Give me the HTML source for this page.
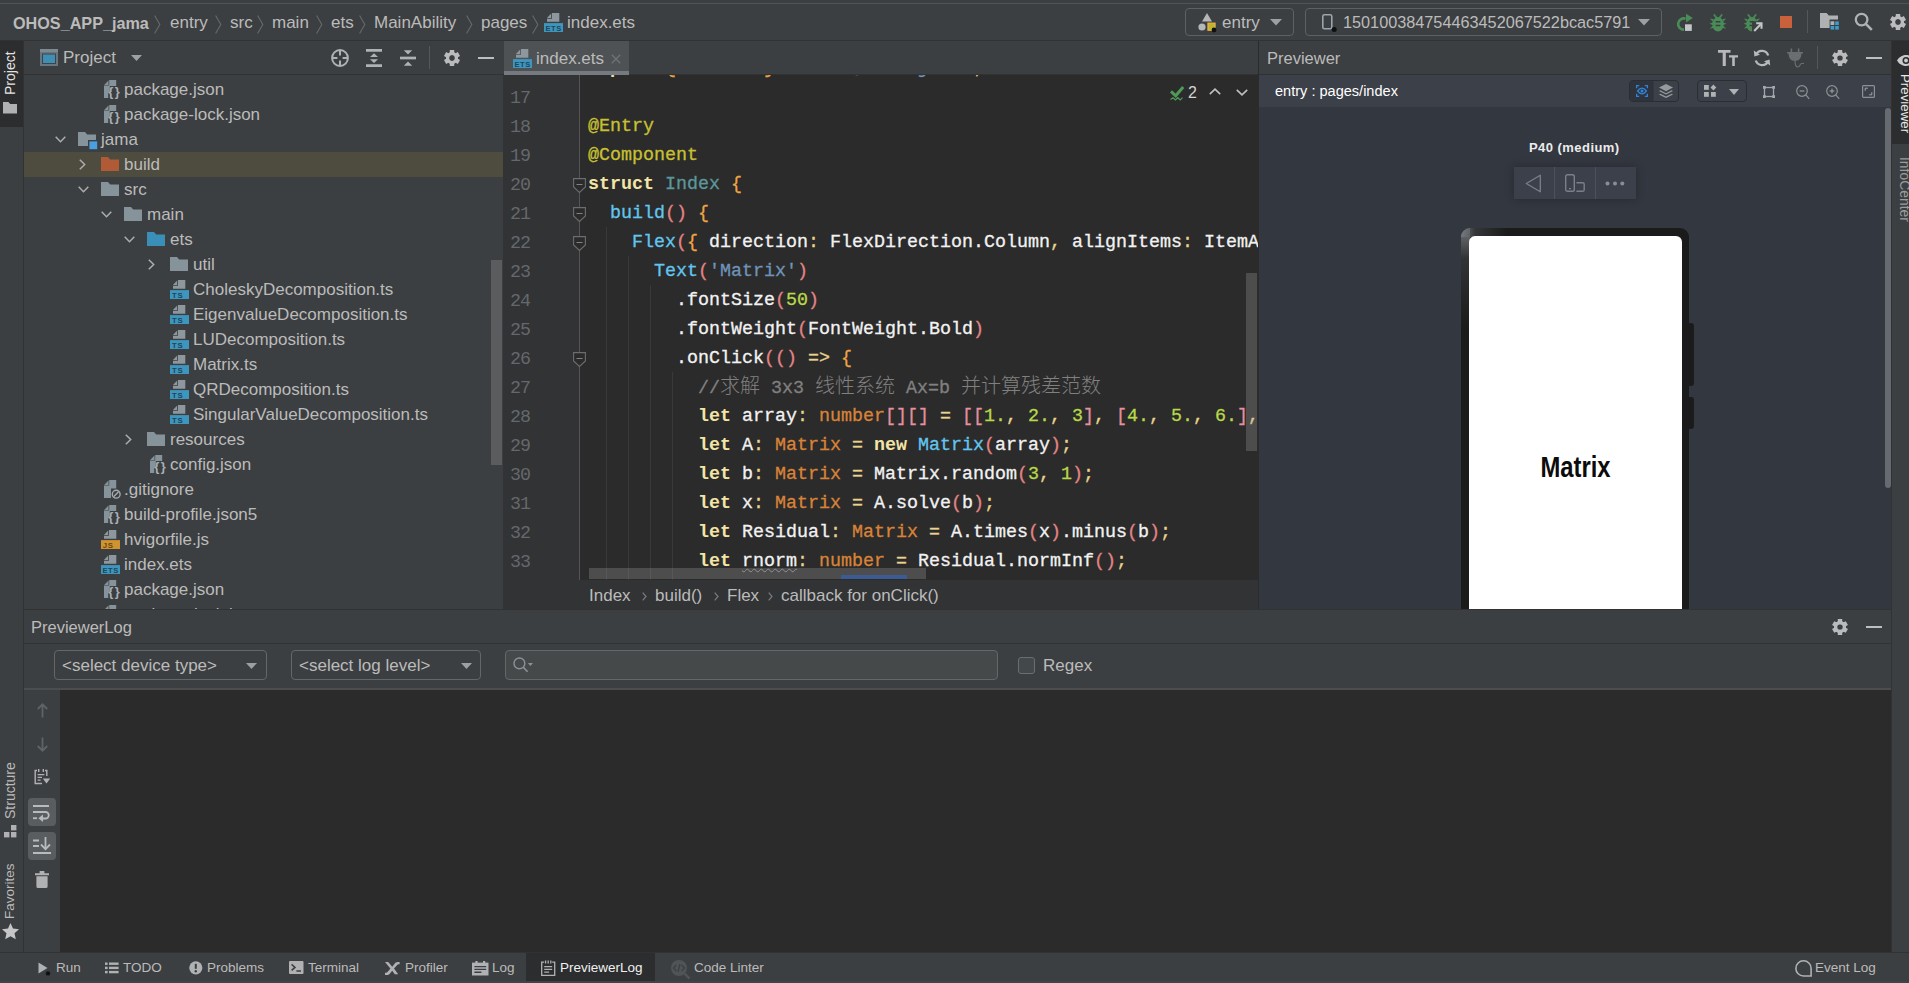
<!DOCTYPE html>
<html lang="en">
<head>
<meta charset="utf-8">
<title>OHOS_APP_jama - index.ets</title>
<style>
*{box-sizing:border-box;margin:0;padding:0}
html,body{width:1909px;height:983px;overflow:hidden;background:#3c3f41}
body{position:relative;font-family:"Liberation Sans","Noto Sans CJK SC",sans-serif;font-size:17px;color:#bbbbbb;-webkit-font-smoothing:antialiased}
.abs{position:absolute}
.t{position:absolute;white-space:pre;line-height:20px;height:20px}
svg{position:absolute;overflow:visible}
/* nav */
#nav{position:absolute;left:0;top:0;width:1909px;height:41px;background:#3c3f41;border-bottom:1px solid #323232}
#topline{position:absolute;left:0;top:3px;width:1909px;height:1px;background:#515456}
.crumb{position:absolute;top:12px;height:22px;line-height:22px;white-space:pre;color:#bbbbbb;font-size:17px}
.csep{position:absolute;top:12px;width:7px;height:21px}
.combo{position:absolute;border:1px solid #5e6162;border-radius:4px;background:#3c3f41}
/* stripes */
#lstripe{position:absolute;left:0;top:41px;width:24px;height:911px;background:#3c3f41;border-right:1px solid #323232}
#rstripe{position:absolute;left:1891px;top:41px;width:18px;height:911px;background:#3c3f41;border-left:1px solid #323232}
.vtxt{position:absolute;white-space:pre;font-size:14px;line-height:18px;height:18px;transform-origin:0 0}
/* project */
#proj{position:absolute;left:24px;top:41px;width:479px;height:568px;background:#3c3f41;overflow:hidden}
#projhead{position:absolute;left:0;top:0;width:479px;height:34px;border-bottom:1px solid #323232}
.row{position:absolute;left:0;width:479px;height:25px}
.row .lbl{position:absolute;top:3px;line-height:20px;height:20px;white-space:pre;font-size:17px;color:#bbbbbb}
.row.sel{background:#4e4b3f}
/* editor */
#edtabs{position:absolute;left:503px;top:41px;width:755px;height:34px;background:#3c3f41;border-bottom:1px solid #323232}
#tab{position:absolute;left:1px;top:0;width:125px;height:34px;background:#4e5254;border-bottom:4px solid #747a80}
#editor{position:absolute;left:503px;top:75px;width:755px;height:505px;background:#2b2b2b;overflow:hidden}
#gutter{position:absolute;left:0;top:0;width:77px;height:505px;background:#313335;border-right:1px solid #555555}
.ln{position:absolute;left:7px;letter-spacing:-1px;width:24px;height:29px;line-height:29px;font-family:"Liberation Mono",monospace;font-size:18.33px;color:#65686b;white-space:pre}
.cl{position:absolute;left:85px;height:29px;line-height:29px;font-family:"Liberation Mono","Noto Sans CJK SC",monospace;font-size:18.33px;color:#f2f2f2;white-space:pre;-webkit-text-stroke:0.3px currentColor}
.cl .kw{-webkit-text-stroke:0}
.kw{color:#f3e5a6;font-weight:bold}
.cj{font-size:20px;-webkit-text-stroke:0;font-weight:300}
.wv{text-decoration:underline wavy #8c8c8c 1px;text-underline-offset:2px}
.sq{color:#e590a0}
.an{color:#c8c032}
.ty{color:#5c979c}
.fn{color:#62c6ee}
.br{color:#f0a444}
.op{color:#e8d48c}
.pr{color:#e28484}
.tyo{color:#d98338}
.nu{color:#b8d84a}
.st{color:#6f94b8}
.cm{color:#808080}
.ig{position:absolute;width:1px;background:#393939}
#crumbs{position:absolute;left:503px;top:580px;width:755px;height:29px;background:#313335}
/* previewer */
#pv{position:absolute;left:1258px;top:41px;width:633px;height:568px;background:#33373f;border-left:1px solid #2b2b2b;overflow:hidden}
#pvhead{position:absolute;left:0;top:0;width:633px;height:34px;background:#3c3f41;border-bottom:1px solid #2f3133}
#pvbar{position:absolute;left:0;top:34px;width:633px;height:32px;background:#3c4048}
/* bottom */
#bp{position:absolute;left:24px;top:609px;width:1867px;height:343px;background:#3c3f41;border-top:1px solid #323232}
#bphead{position:absolute;left:0;top:0;width:1867px;height:34px;border-bottom:1px solid #323232}
#console{position:absolute;left:36px;top:80px;width:1831px;height:262px;background:#2b2b2b}
#bpline{position:absolute;left:0;top:78px;width:1867px;height:2px;background:#4b4d4f}
#status{position:absolute;left:0;top:952px;width:1909px;height:31px;background:#3c3f41;border-top:1px solid #323232}
.sb{position:absolute;top:5px;height:20px;line-height:20px;font-size:13.5px;white-space:pre;color:#bbbbbb}
</style>
</head>
<body>

<div id="nav"><div id="topline"></div>
<div class="crumb" style="left:13px;font-weight:bold;font-size:16.2px;">OHOS_APP_jama</div>
<div class="crumb" style="left:170px;">entry</div>
<div class="crumb" style="left:230px;">src</div>
<div class="crumb" style="left:272px;">main</div>
<div class="crumb" style="left:331px;">ets</div>
<div class="crumb" style="left:374px;">MainAbility</div>
<div class="crumb" style="left:481px;">pages</div>
<svg class="csep" style="left:154px;top:13.500px" width="7" height="19" viewBox="0 0 7 19"><path d="M0.600 0.500l5.200 9-5.200 9" fill="none" stroke="#66696b" stroke-width="1.100"/></svg>
<svg class="csep" style="left:215px;top:13.500px" width="7" height="19" viewBox="0 0 7 19"><path d="M0.600 0.500l5.200 9-5.200 9" fill="none" stroke="#66696b" stroke-width="1.100"/></svg>
<svg class="csep" style="left:257px;top:13.500px" width="7" height="19" viewBox="0 0 7 19"><path d="M0.600 0.500l5.200 9-5.200 9" fill="none" stroke="#66696b" stroke-width="1.100"/></svg>
<svg class="csep" style="left:316px;top:13.500px" width="7" height="19" viewBox="0 0 7 19"><path d="M0.600 0.500l5.200 9-5.200 9" fill="none" stroke="#66696b" stroke-width="1.100"/></svg>
<svg class="csep" style="left:359px;top:13.500px" width="7" height="19" viewBox="0 0 7 19"><path d="M0.600 0.500l5.200 9-5.200 9" fill="none" stroke="#66696b" stroke-width="1.100"/></svg>
<svg class="csep" style="left:466px;top:13.500px" width="7" height="19" viewBox="0 0 7 19"><path d="M0.600 0.500l5.200 9-5.200 9" fill="none" stroke="#66696b" stroke-width="1.100"/></svg>
<svg class="csep" style="left:532px;top:13.500px" width="7" height="19" viewBox="0 0 7 19"><path d="M0.600 0.500l5.200 9-5.200 9" fill="none" stroke="#66696b" stroke-width="1.100"/></svg>
<svg style="left:544px;top:13px" width="19" height="19" viewBox="0 0 19 19"><path d="M8 0H15.300v8.800H3V5.700h5z" fill="#8d979d"/><path d="M7.200 0.400v4.700H2.900z" fill="#8d979d"/><rect x="0" y="10.100" width="19" height="8.900" fill="#3e96be"/><text x="1.5" y="17.500" font-family="Liberation Sans, sans-serif" font-size="7.6" font-weight="bold" fill="#1f4558" letter-spacing="0.5">ETS</text></svg>
<div class="crumb" style="left:567px">index.ets</div>
<div class="combo" style="left:1185px;top:8px;width:109px;height:28px"></div>
<svg style="left:1197px;top:13px" width="21" height="19" viewBox="0 0 21 19" ><path d="M10 0l5 8.5H5z" fill="#b4b6b8"/><circle cx="5" cy="14" r="3.6" fill="#b4b6b8"/><rect x="11" y="10.2" width="7" height="7" fill="#b9b530" stroke="#eeb040" stroke-width="1.300"/><circle cx="17" cy="17" r="2.4" fill="#101010"/></svg>
<div class="crumb" style="left:1222px;">entry</div>
<svg style="left:1270px;top:19px" width="12" height="6.5" viewBox="0 0 12 6.5"><path d="M0 0h12l-6.0 6.5z" fill="#9da0a2"/></svg>
<div class="combo" style="left:1305px;top:8px;width:357px;height:28px"></div>
<svg style="left:1322px;top:14px" width="16" height="19" viewBox="0 0 16 19" ><rect x="0.8" y="0.8" width="9" height="14" rx="1.6" fill="#3c3f41" stroke="#9aa4ac" stroke-width="1.6"/><circle cx="12.2" cy="15.4" r="2.5" fill="#101010"/></svg>
<div class="crumb" style="left:1343px;top:11px;font-size:16.25px">150100384754463452067522bcac5791</div>
<svg style="left:1638px;top:19px" width="12" height="6.5" viewBox="0 0 12 6.5"><path d="M0 0h12l-6.0 6.5z" fill="#9da0a2"/></svg>
<svg style="left:1674px;top:11px" width="22" height="22" viewBox="0 0 22 22" ><path d="M10.100 18.600A5.600 5.600 0 1 1 11.500 7.700" fill="none" stroke="#4a8c57" stroke-width="2.700"/><path d="M12 2.700l6.900 4.400L12 11.500z" fill="#4a8c57"/><rect x="10" y="12.300" width="8.800" height="8.700" fill="#3c3f41"/><rect x="11" y="13.300" width="6.800" height="6.600" fill="#c3c5c7"/></svg>
<svg style="left:1709px;top:13px" width="20" height="20" viewBox="0 0 20 20" ><g fill="#4a8c57"><ellipse cx="9" cy="11.300" rx="5.600" ry="7.200"/><path d="M4.600 6.200L0.800 5.600 4 8.800zM13.400 6.200l3.800-0.600-3.200 3.200z"/><path d="M4 9.400L0.500 10.700 4 12zM14 9.400l3.500 1.300L14 12z"/><path d="M4 12.800l-3.200 2.600 4.200-0.400zM14 12.800l3.200 2.600-4.200-0.400z"/></g><path d="M7.300 4.600L5.300 1.900M10.700 4.600L12.700 1.900" stroke="#4a8c57" stroke-width="1.700" stroke-linecap="round"/><path d="M6.600 8.800h4.800M6.600 12.400h4.800" stroke="#3c3f41" stroke-width="1.500"/></svg>
<svg style="left:1743px;top:13px" width="20" height="20" viewBox="0 0 20 20" ><g fill="#4a8c57"><ellipse cx="9" cy="11.300" rx="5.600" ry="7.200"/><path d="M4.600 6.200L0.800 5.600 4 8.800zM13.400 6.200l3.800-0.600-3.200 3.200z"/><path d="M4 9.400L0.500 10.700 4 12zM14 9.400l3.500 1.300L14 12z"/><path d="M4 12.800l-3.200 2.600 4.200-0.400zM14 12.800l3.200 2.600-4.200-0.400z"/></g><path d="M7.300 4.600L5.300 1.900M10.700 4.600L12.700 1.900" stroke="#4a8c57" stroke-width="1.700" stroke-linecap="round"/><path d="M6.600 8.800h4.800M6.600 12.400h4.800" stroke="#3c3f41" stroke-width="1.500"/><path d="M9 8.400h11v11H9z" fill="#3c3f41"/><path d="M11.200 18l7-7.200" stroke="#c3c5c7" stroke-width="2.100"/><path d="M13.200 10.200h5.300v5.600" fill="none" stroke="#c3c5c7" stroke-width="2.100"/></svg>
<div class="abs" style="left:1779.5px;top:15.5px;width:12.600px;height:12.400px;background:#c9623c"></div>
<div class="abs" style="left:1807px;top:10px;width:1px;height:23px;background:#55585a"></div>
<svg style="left:1820px;top:13px" width="22" height="19" viewBox="0 0 22 19" ><path d="M0 0h6.6l2.2 2.6H18V6.6H9.6V15H0z" fill="#afb1b3"/><g fill="#3e9ccb"><rect x="10.6" y="8.4" width="3.6" height="3.6"/><rect x="15.2" y="8.4" width="3.6" height="3.6"/><rect x="10.6" y="13" width="3.6" height="3.6"/><rect x="15.2" y="13" width="3.6" height="3.6"/></g><rect x="10.6" y="8.4" width="3.6" height="3.6" fill="#afb1b3"/></svg>
<svg style="left:1854px;top:12px" width="20" height="20" viewBox="0 0 20 20" ><circle cx="7.6" cy="7.6" r="5.8" fill="none" stroke="#afb1b3" stroke-width="2.3"/><path d="M11.8 11.8l6 6" stroke="#afb1b3" stroke-width="2.6"/></svg>
<svg style="left:1889px;top:13px" width="18" height="18" viewBox="0 0 18 18" ><path d="M6.76,3.46L6.79,1.00L11.21,1.00L11.24,3.46L12.67,4.29L14.82,3.08L17.03,6.92L14.92,8.17L14.92,9.83L17.03,11.08L14.82,14.92L12.67,13.71L11.24,14.54L11.21,17.00L6.79,17.00L6.76,14.54L5.33,13.71L3.18,14.92L0.97,11.08L3.08,9.83L3.08,8.17L0.97,6.92L3.18,3.08L5.33,4.29ZM11.91,9A2.91,2.91 0 1 0 6.09,9A2.91,2.91 0 1 0 11.91,9Z" fill="#b9bbbd" fill-rule="evenodd"/><path d="M14.98,9A5.98,5.98 0 1 1 3.02,9A5.98,5.98 0 1 1 14.98,9ZM11.91,9A2.91,2.91 0 1 0 6.09,9A2.91,2.91 0 1 0 11.91,9Z" fill="#b9bbbd" fill-rule="evenodd"/></svg>
</div>
<div id="lstripe">
<div class="abs" style="left:0;top:0;width:23px;height:86px;background:#2b2d2e"></div>
<div class="vtxt" style="left:1px;top:54px;transform:rotate(-90deg);font-size:14px;color:#e4e4e4">Project</div>
<svg style="left:3px;top:60.5px" width="14" height="11.5" viewBox="0 0 14 11.5" ><path d="M0 0h5.400l1.800 2H14V11.500H0z" fill="#afb1b3"/></svg>
<div class="vtxt" style="left:1px;top:778px;transform:rotate(-90deg);font-size:14px;color:#bbbbbb">Structure</div>
<svg style="left:4px;top:784px" width="13" height="13" viewBox="0 0 13 13" ><g fill="#afb1b3"><rect x="7" y="0" width="5.4" height="5.4"/><rect x="0" y="7" width="5.4" height="5.4"/><rect x="7" y="7" width="5.4" height="5.4"/></g></svg>
<div class="vtxt" style="left:1px;top:878px;transform:rotate(-90deg);font-size:13.5px;color:#bbbbbb">Favorites</div>
<svg style="left:2px;top:882px" width="17" height="16" viewBox="0 0 17 16" ><path d="M8.5 0l2.5 5.6 6 .6-4.5 4.1 1.3 6-5.3-3.1-5.3 3.1 1.3-6L0 6.2l6-.6z" fill="#c4c6c8"/></svg>
</div>
<div id="rstripe">
<div class="abs" style="left:0;top:0;width:18px;height:103px;background:#2b2d2e"></div>
<svg style="left:5px;top:14px" width="18" height="11" viewBox="0 0 18 11" ><path d="M0 5.500C2.700 1.300 6 0 9 0s6.300 1.300 9 5.500C15.300 9.700 12 11 9 11S2.700 9.700 0 5.500z" fill="#c8cacc"/><circle cx="9" cy="5.500" r="3.500" fill="#2b2d2e"/><circle cx="9" cy="5.500" r="1.900" fill="#c8cacc"/></svg>
<div class="vtxt" style="left:22px;top:33px;transform:rotate(90deg);font-size:13.3px;color:#e8e8e8">Previewer</div>
<div class="vtxt" style="left:22px;top:116px;transform:rotate(90deg);font-size:13.9px;color:#9a9c9e">InfoCenter</div>
</div>
<div id="proj"><div id="projhead">
<svg style="left:16px;top:8px" width="18" height="17" viewBox="0 0 18 17" ><rect x="0" y="0" width="18" height="17" fill="#6a757d"/><rect x="0" y="0" width="18" height="3" fill="#7e8a92"/><rect x="2.500" y="5" width="13" height="9.500" fill="#3f8fb5" stroke="#3a444b" stroke-width="1"/></svg>
<div class="t" style="left:39px;top:7px">Project</div>
<svg style="left:107px;top:14px" width="11" height="6" viewBox="0 0 11 6"><path d="M0 0h11l-5.5 6z" fill="#9da0a2"/></svg>
<svg style="left:307px;top:8px" width="18" height="18" viewBox="0 0 18 18" ><circle cx="9" cy="9" r="7.900" fill="none" stroke="#afb1b3" stroke-width="2"/><path d="M9 1v5.400M9 11.600V17M1 9h5.400M11.600 9H17" stroke="#afb1b3" stroke-width="2"/></svg>
<svg style="left:342px;top:8px" width="16" height="18" viewBox="0 0 16 18" ><path d="M0 1.400h16M0 16.600h16" stroke="#afb1b3" stroke-width="2.700"/><path d="M8 4.200l4 3.800H4zM8 14l4-3.800H4z" fill="#afb1b3"/></svg>
<svg style="left:376px;top:8px" width="16" height="18" viewBox="0 0 16 18" ><path d="M0 9h16" stroke="#afb1b3" stroke-width="2.700"/><path d="M8 5.400l4.200-4.200H3.800zM8 12.600l4.200 4.200H3.800z" fill="#afb1b3"/></svg>
<div class="abs" style="left:405px;top:5px;width:1px;height:23px;background:#55585a"></div>
<svg style="left:419px;top:8px" width="18" height="18" viewBox="0 0 18 18" ><path d="M6.76,3.46L6.79,1.00L11.21,1.00L11.24,3.46L12.67,4.29L14.82,3.08L17.03,6.92L14.92,8.17L14.92,9.83L17.03,11.08L14.82,14.92L12.67,13.71L11.24,14.54L11.21,17.00L6.79,17.00L6.76,14.54L5.33,13.71L3.18,14.92L0.97,11.08L3.08,9.83L3.08,8.17L0.97,6.92L3.18,3.08L5.33,4.29ZM11.91,9A2.91,2.91 0 1 0 6.09,9A2.91,2.91 0 1 0 11.91,9Z" fill="#b9bbbd" fill-rule="evenodd"/><path d="M14.98,9A5.98,5.98 0 1 1 3.02,9A5.98,5.98 0 1 1 14.98,9ZM11.91,9A2.91,2.91 0 1 0 6.09,9A2.91,2.91 0 1 0 11.91,9Z" fill="#b9bbbd" fill-rule="evenodd"/></svg>
<div class="abs" style="left:454px;top:15.500px;width:15.600px;height:2.600px;background:#bcbec0"></div>
</div>
<div class="row" style="top:36px">
<svg style="left:80px;top:3px" width="17" height="20" viewBox="0 0 17 20"><path d="M5.200 0H12.200v6H5.800v6.500H4.200v5.500H0V5.600h5.200z" fill="#87939a"/><path d="M4.500 0.400v4.500H0.200z" fill="#87939a"/><text x="4.300" y="16.100" font-family="Liberation Sans, sans-serif" font-size="13" font-weight="bold" fill="#a9b0b5" letter-spacing="1.300">{}</text></svg>
<div class="lbl" style="left:100px">package.json</div></div>
<div class="row" style="top:61px">
<svg style="left:80px;top:3px" width="17" height="20" viewBox="0 0 17 20"><path d="M5.200 0H12.200v6H5.800v6.500H4.200v5.500H0V5.600h5.200z" fill="#87939a"/><path d="M4.500 0.400v4.500H0.200z" fill="#87939a"/><text x="4.300" y="16.100" font-family="Liberation Sans, sans-serif" font-size="13" font-weight="bold" fill="#a9b0b5" letter-spacing="1.300">{}</text></svg>
<div class="lbl" style="left:100px">package-lock.json</div></div>
<div class="row" style="top:86px">
<svg style="left:31px;top:9px" width="11" height="7" viewBox="0 0 11 7"><path d="M0.7 0.8l4.8 4.9 4.8-4.9" fill="none" stroke="#adadad" stroke-width="1.5"/></svg>
<svg style="left:54px;top:5px" width="18" height="14" viewBox="0 0 18 14"><path d="M0 0h7l2.2 2.6H18V14H0z" fill="#87939a"/></svg>
<svg style="left:64px;top:13px" width="10" height="10" viewBox="0 0 10 10" ><rect x="0" y="0" width="10" height="10" fill="#3c3f41"/><rect x="1.4" y="1.4" width="7.8" height="7.8" fill="#4a9fe0"/></svg>
<div class="lbl" style="left:77px">jama</div></div>
<div class="row sel" style="top:111px">
<svg style="left:55px;top:7px" width="7" height="11" viewBox="0 0 7 11"><path d="M0.8 0.7l4.9 4.8-4.9 4.8" fill="none" stroke="#adadad" stroke-width="1.5"/></svg>
<svg style="left:77px;top:5px" width="18" height="14" viewBox="0 0 18 14"><path d="M0 0h7l2.2 2.6H18V14H0z" fill="#b05a36"/></svg>
<div class="lbl" style="left:100px">build</div></div>
<div class="row" style="top:136px">
<svg style="left:54px;top:9px" width="11" height="7" viewBox="0 0 11 7"><path d="M0.7 0.8l4.8 4.9 4.8-4.9" fill="none" stroke="#adadad" stroke-width="1.5"/></svg>
<svg style="left:77px;top:5px" width="18" height="14" viewBox="0 0 18 14"><path d="M0 0h7l2.2 2.6H18V14H0z" fill="#87939a"/></svg>
<div class="lbl" style="left:100px">src</div></div>
<div class="row" style="top:161px">
<svg style="left:77px;top:9px" width="11" height="7" viewBox="0 0 11 7"><path d="M0.7 0.8l4.8 4.9 4.8-4.9" fill="none" stroke="#adadad" stroke-width="1.5"/></svg>
<svg style="left:100px;top:5px" width="18" height="14" viewBox="0 0 18 14"><path d="M0 0h7l2.2 2.6H18V14H0z" fill="#87939a"/></svg>
<div class="lbl" style="left:123px">main</div></div>
<div class="row" style="top:186px">
<svg style="left:100px;top:9px" width="11" height="7" viewBox="0 0 11 7"><path d="M0.7 0.8l4.8 4.9 4.8-4.9" fill="none" stroke="#adadad" stroke-width="1.5"/></svg>
<svg style="left:123px;top:5px" width="18" height="14" viewBox="0 0 18 14"><path d="M0 0h7l2.2 2.6H18V14H0z" fill="#3a8fb8"/></svg>
<div class="lbl" style="left:146px">ets</div></div>
<div class="row" style="top:211px">
<svg style="left:124px;top:7px" width="7" height="11" viewBox="0 0 7 11"><path d="M0.8 0.7l4.9 4.8-4.9 4.8" fill="none" stroke="#adadad" stroke-width="1.5"/></svg>
<svg style="left:146px;top:5px" width="18" height="14" viewBox="0 0 18 14"><path d="M0 0h7l2.2 2.6H18V14H0z" fill="#87939a"/></svg>
<div class="lbl" style="left:169px">util</div></div>
<div class="row" style="top:236px">
<svg style="left:146px;top:3px" width="19" height="19" viewBox="0 0 19 19"><path d="M8 0H15.300v8.800H3V5.700h5z" fill="#8d979d"/><path d="M7.200 0.400v4.700H2.900z" fill="#8d979d"/><rect x="0" y="10.100" width="19" height="8.900" fill="#3e96be"/><text x="2.1" y="17.500" font-family="Liberation Sans, sans-serif" font-size="7.8" font-weight="bold" fill="#1f4558" letter-spacing="0.6">TS</text></svg>
<div class="lbl" style="left:169px">CholeskyDecomposition.ts</div></div>
<div class="row" style="top:261px">
<svg style="left:146px;top:3px" width="19" height="19" viewBox="0 0 19 19"><path d="M8 0H15.300v8.800H3V5.700h5z" fill="#8d979d"/><path d="M7.200 0.400v4.700H2.900z" fill="#8d979d"/><rect x="0" y="10.100" width="19" height="8.900" fill="#3e96be"/><text x="2.1" y="17.500" font-family="Liberation Sans, sans-serif" font-size="7.8" font-weight="bold" fill="#1f4558" letter-spacing="0.6">TS</text></svg>
<div class="lbl" style="left:169px">EigenvalueDecomposition.ts</div></div>
<div class="row" style="top:286px">
<svg style="left:146px;top:3px" width="19" height="19" viewBox="0 0 19 19"><path d="M8 0H15.300v8.800H3V5.700h5z" fill="#8d979d"/><path d="M7.200 0.400v4.700H2.900z" fill="#8d979d"/><rect x="0" y="10.100" width="19" height="8.900" fill="#3e96be"/><text x="2.1" y="17.500" font-family="Liberation Sans, sans-serif" font-size="7.8" font-weight="bold" fill="#1f4558" letter-spacing="0.6">TS</text></svg>
<div class="lbl" style="left:169px">LUDecomposition.ts</div></div>
<div class="row" style="top:311px">
<svg style="left:146px;top:3px" width="19" height="19" viewBox="0 0 19 19"><path d="M8 0H15.300v8.800H3V5.700h5z" fill="#8d979d"/><path d="M7.200 0.400v4.700H2.900z" fill="#8d979d"/><rect x="0" y="10.100" width="19" height="8.900" fill="#3e96be"/><text x="2.1" y="17.500" font-family="Liberation Sans, sans-serif" font-size="7.8" font-weight="bold" fill="#1f4558" letter-spacing="0.6">TS</text></svg>
<div class="lbl" style="left:169px">Matrix.ts</div></div>
<div class="row" style="top:336px">
<svg style="left:146px;top:3px" width="19" height="19" viewBox="0 0 19 19"><path d="M8 0H15.300v8.800H3V5.700h5z" fill="#8d979d"/><path d="M7.200 0.400v4.700H2.900z" fill="#8d979d"/><rect x="0" y="10.100" width="19" height="8.900" fill="#3e96be"/><text x="2.1" y="17.500" font-family="Liberation Sans, sans-serif" font-size="7.8" font-weight="bold" fill="#1f4558" letter-spacing="0.6">TS</text></svg>
<div class="lbl" style="left:169px">QRDecomposition.ts</div></div>
<div class="row" style="top:361px">
<svg style="left:146px;top:3px" width="19" height="19" viewBox="0 0 19 19"><path d="M8 0H15.300v8.800H3V5.700h5z" fill="#8d979d"/><path d="M7.200 0.400v4.700H2.900z" fill="#8d979d"/><rect x="0" y="10.100" width="19" height="8.900" fill="#3e96be"/><text x="2.1" y="17.500" font-family="Liberation Sans, sans-serif" font-size="7.8" font-weight="bold" fill="#1f4558" letter-spacing="0.6">TS</text></svg>
<div class="lbl" style="left:169px">SingularValueDecomposition.ts</div></div>
<div class="row" style="top:386px">
<svg style="left:101px;top:7px" width="7" height="11" viewBox="0 0 7 11"><path d="M0.8 0.7l4.9 4.8-4.9 4.8" fill="none" stroke="#adadad" stroke-width="1.5"/></svg>
<svg style="left:123px;top:5px" width="18" height="14" viewBox="0 0 18 14"><path d="M0 0h7l2.2 2.6H18V14H0z" fill="#87939a"/></svg>
<div class="lbl" style="left:146px">resources</div></div>
<div class="row" style="top:411px">
<svg style="left:126px;top:3px" width="17" height="20" viewBox="0 0 17 20"><path d="M5.200 0H12.200v6H5.800v6.500H4.200v5.500H0V5.600h5.200z" fill="#87939a"/><path d="M4.500 0.400v4.500H0.200z" fill="#87939a"/><text x="4.300" y="16.100" font-family="Liberation Sans, sans-serif" font-size="13" font-weight="bold" fill="#a9b0b5" letter-spacing="1.300">{}</text></svg>
<div class="lbl" style="left:146px">config.json</div></div>
<div class="row" style="top:436px">
<svg style="left:80px;top:3px" width="17" height="19" viewBox="0 0 17 19"><path d="M5.200 0H12.200v8.500H7v9.500H0V5.600h5.200z" fill="#87939a"/><path d="M4.500 0.400v4.500H0.200z" fill="#87939a"/><circle cx="12.2" cy="14.2" r="3.9" fill="none" stroke="#a4abb0" stroke-width="1.4"/><path d="M9.6 16.8l5.2-5.2" stroke="#a4abb0" stroke-width="1.4"/></svg>
<div class="lbl" style="left:100px">.gitignore</div></div>
<div class="row" style="top:461px">
<svg style="left:80px;top:3px" width="17" height="20" viewBox="0 0 17 20"><path d="M5.200 0H12.200v6H5.800v6.500H4.200v5.500H0V5.600h5.200z" fill="#87939a"/><path d="M4.500 0.400v4.500H0.200z" fill="#87939a"/><text x="4.300" y="16.100" font-family="Liberation Sans, sans-serif" font-size="13" font-weight="bold" fill="#a9b0b5" letter-spacing="1.300">{}</text></svg>
<div class="lbl" style="left:100px">build-profile.json5</div></div>
<div class="row" style="top:486px">
<svg style="left:77px;top:3px" width="19" height="19" viewBox="0 0 19 19"><path d="M8 0H15.300v8.800H3V5.700h5z" fill="#8d979d"/><path d="M7.200 0.400v4.700H2.900z" fill="#8d979d"/><rect x="0" y="10.100" width="19" height="8.900" fill="#cf9330"/><text x="1.8" y="17.500" font-family="Liberation Sans, sans-serif" font-size="7.8" font-weight="bold" fill="#6a4710" letter-spacing="0.6">JS</text></svg>
<div class="lbl" style="left:100px">hvigorfile.js</div></div>
<div class="row" style="top:511px">
<svg style="left:77px;top:3px" width="19" height="19" viewBox="0 0 19 19"><path d="M8 0H15.300v8.800H3V5.700h5z" fill="#8d979d"/><path d="M7.200 0.400v4.700H2.900z" fill="#8d979d"/><rect x="0" y="10.100" width="19" height="8.900" fill="#3e96be"/><text x="1.5" y="17.500" font-family="Liberation Sans, sans-serif" font-size="7.6" font-weight="bold" fill="#1f4558" letter-spacing="0.5">ETS</text></svg>
<div class="lbl" style="left:100px">index.ets</div></div>
<div class="row" style="top:536px">
<svg style="left:80px;top:3px" width="17" height="20" viewBox="0 0 17 20"><path d="M5.200 0H12.200v6H5.800v6.500H4.200v5.500H0V5.600h5.200z" fill="#87939a"/><path d="M4.500 0.400v4.500H0.200z" fill="#87939a"/><text x="4.300" y="16.100" font-family="Liberation Sans, sans-serif" font-size="13" font-weight="bold" fill="#a9b0b5" letter-spacing="1.300">{}</text></svg>
<div class="lbl" style="left:100px">package.json</div></div>
<div class="row" style="top:561px">
<svg style="left:80px;top:3px" width="17" height="20" viewBox="0 0 17 20"><path d="M5.200 0H12.200v6H5.800v6.500H4.200v5.500H0V5.600h5.200z" fill="#87939a"/><path d="M4.500 0.400v4.500H0.200z" fill="#87939a"/><text x="4.300" y="16.100" font-family="Liberation Sans, sans-serif" font-size="13" font-weight="bold" fill="#a9b0b5" letter-spacing="1.300">{}</text></svg>
<div class="lbl" style="left:100px">package-lock.json</div></div>
<div class="abs" style="left:467px;top:219px;width:11px;height:205px;background:#5a5c5e"></div>
</div>
<div id="edtabs"><div id="tab"></div>
<svg style="left:10px;top:8px" width="19" height="19" viewBox="0 0 19 19"><path d="M8 0H15.300v8.800H3V5.700h5z" fill="#8d979d"/><path d="M7.200 0.400v4.700H2.900z" fill="#8d979d"/><rect x="0" y="10.100" width="19" height="8.900" fill="#3e96be"/><text x="1.5" y="17.500" font-family="Liberation Sans, sans-serif" font-size="7.6" font-weight="bold" fill="#1f4558" letter-spacing="0.5">ETS</text></svg>
<div class="t" style="left:33px;top:7.500px;color:#bbbbbb">index.ets</div>
<svg style="left:108px;top:12.5px" width="10" height="10" viewBox="0 0 10 10" ><path d="M0.8 0.8l8.4 8.400M9.2 0.8L0.8 9.200" stroke="#6f7375" stroke-width="1.3"/></svg>
</div>
<div id="editor"><div id="gutter"></div>
<div class="ig" style="left:103px;top:152px;height:353px"></div>
<div class="ig" style="left:125px;top:181px;height:324px"></div>
<div class="ig" style="left:147px;top:210px;height:295px"></div>
<div class="ig" style="left:169px;top:297px;height:208px"></div>
<div class="cl" style="top:-21px"><span class="kw">import</span> <span class="br">{</span> Matrix <span class="br">}</span> <span class="kw">from</span> <span class="st">&#x27;@ohos/jama&#x27;</span><span class="op">;</span></div>
<div class="ln" style="top:9px">17</div>
<div class="ln" style="top:38px">18</div>
<div class="cl" style="top:37px"><span class="an">@Entry</span></div>
<div class="ln" style="top:67px">19</div>
<div class="cl" style="top:66px"><span class="an">@Component</span></div>
<div class="ln" style="top:96px">20</div>
<div class="cl" style="top:95px"><span class="kw">struct</span> <span class="ty">Index</span> <span class="br">{</span></div>
<div class="ln" style="top:125px">21</div>
<div class="cl" style="top:124px">  <span class="fn">build</span><span class="pr">()</span> <span class="br">{</span></div>
<div class="ln" style="top:154px">22</div>
<div class="cl" style="top:153px">    <span class="fn">Flex</span><span class="pr">(</span><span class="br">{</span> direction<span class="op">:</span> FlexDirection.Column<span class="op">,</span> alignItems<span class="op">:</span> ItemAlign.Center</div>
<div class="ln" style="top:183px">23</div>
<div class="cl" style="top:182px">      <span class="fn">Text</span><span class="pr">(</span><span class="st">&#x27;Matrix&#x27;</span><span class="pr">)</span></div>
<div class="ln" style="top:212px">24</div>
<div class="cl" style="top:211px">        .fontSize<span class="pr">(</span><span class="nu">50</span><span class="pr">)</span></div>
<div class="ln" style="top:241px">25</div>
<div class="cl" style="top:240px">        .fontWeight<span class="pr">(</span>FontWeight.Bold<span class="pr">)</span></div>
<div class="ln" style="top:270px">26</div>
<div class="cl" style="top:269px">        .onClick<span class="pr">(()</span> <span class="op">=&gt;</span> <span class="br">{</span></div>
<div class="ln" style="top:299px">27</div>
<div class="cl" style="top:298px">          <span class="cm">//</span><span class="cm cj">求解</span><span class="cm"> 3x3 </span><span class="cm cj">线性系统</span><span class="cm"> Ax=b </span><span class="cm cj">并计算残差范数</span></div>
<div class="ln" style="top:328px">28</div>
<div class="cl" style="top:327px">          <span class="kw">let</span> array<span class="op">:</span> <span class="tyo">number</span><span class="sq">[][]</span> <span class="op">=</span> <span class="sq">[[</span><span class="nu">1.</span><span class="op">,</span> <span class="nu">2.</span><span class="op">,</span> <span class="nu">3</span><span class="sq">]</span><span class="op">,</span> <span class="sq">[</span><span class="nu">4.</span><span class="op">,</span> <span class="nu">5.</span><span class="op">,</span> <span class="nu">6.</span><span class="sq">]</span><span class="op">,</span> <span class="sq">[</span><span class="nu">7.</span><span class="op">,</span> <span class="nu">8.</span><span class="op">,</span> <span class="nu">10.</span><span class="sq">]]</span><span class="op">;</span></div>
<div class="ln" style="top:357px">29</div>
<div class="cl" style="top:356px">          <span class="kw">let</span> A<span class="op">:</span> <span class="tyo">Matrix</span> <span class="op">=</span> <span class="kw">new</span> <span class="fn">Matrix</span><span class="pr">(</span>array<span class="pr">)</span><span class="op">;</span></div>
<div class="ln" style="top:386px">30</div>
<div class="cl" style="top:385px">          <span class="kw">let</span> b<span class="op">:</span> <span class="tyo">Matrix</span> <span class="op">=</span> Matrix.random<span class="pr">(</span><span class="nu">3</span><span class="op">,</span> <span class="nu">1</span><span class="pr">)</span><span class="op">;</span></div>
<div class="ln" style="top:415px">31</div>
<div class="cl" style="top:414px">          <span class="kw">let</span> x<span class="op">:</span> <span class="tyo">Matrix</span> <span class="op">=</span> A.solve<span class="pr">(</span>b<span class="pr">)</span><span class="op">;</span></div>
<div class="ln" style="top:444px">32</div>
<div class="cl" style="top:443px">          <span class="kw">let</span> Residual<span class="op">:</span> <span class="tyo">Matrix</span> <span class="op">=</span> A.times<span class="pr">(</span>x<span class="pr">)</span>.minus<span class="pr">(</span>b<span class="pr">)</span><span class="op">;</span></div>
<div class="ln" style="top:473px">33</div>
<div class="cl" style="top:472px">          <span class="kw">let</span> <span class="wv">rnorm</span><span class="op">:</span> <span class="tyo">number</span> <span class="op">=</span> Residual.normInf<span class="pr">()</span><span class="op">;</span></div>
<div class="ln" style="top:502px">34</div>
<svg style="left:70px;top:103.0px" width="13" height="15" viewBox="0 0 13 15" ><path d="M0.6 0.6h11.800v8.400L6.500 14.400 0.600 9z" fill="#2b2b2b" stroke="#6b6e70" stroke-width="1.1"/><path d="M3.500 6.500h6" stroke="#808386" stroke-width="1"/></svg>
<svg style="left:70px;top:132.0px" width="13" height="15" viewBox="0 0 13 15" ><path d="M0.6 0.6h11.800v8.400L6.500 14.400 0.600 9z" fill="#2b2b2b" stroke="#6b6e70" stroke-width="1.1"/><path d="M3.500 6.500h6" stroke="#808386" stroke-width="1"/></svg>
<svg style="left:70px;top:161.0px" width="13" height="15" viewBox="0 0 13 15" ><path d="M0.6 0.6h11.800v8.400L6.500 14.400 0.600 9z" fill="#2b2b2b" stroke="#6b6e70" stroke-width="1.1"/><path d="M3.500 6.500h6" stroke="#808386" stroke-width="1"/></svg>
<svg style="left:70px;top:277.0px" width="13" height="15" viewBox="0 0 13 15" ><path d="M0.6 0.6h11.800v8.400L6.500 14.400 0.600 9z" fill="#2b2b2b" stroke="#6b6e70" stroke-width="1.1"/><path d="M3.500 6.500h6" stroke="#808386" stroke-width="1"/></svg>
<svg style="left:667px;top:11px" width="15" height="16" viewBox="0 0 15 16" ><path d="M1 5.400l4.700 4.400L13.200 1" fill="none" stroke="#4f9a58" stroke-width="3"/><path d="M0.5 13.500l2.500-1.800 2.400 2.300 2.400-2.300 2.400 2.300 2.300-2.300" fill="none" stroke="#4f9a58" stroke-width="1.2"/></svg>
<div class="t" style="left:685px;top:8px;font-size:16px;color:#d4d4d4">2</div>
<svg style="left:706px;top:13px" width="12" height="7" viewBox="0 0 12 7" ><path d="M0.800 6.200l5.200-5 5.200 5" fill="none" stroke="#c0c0c0" stroke-width="1.600"/></svg>
<svg style="left:733px;top:14px" width="12" height="7" viewBox="0 0 12 7" ><path d="M0.800 0.800l5.200 5 5.200-5" fill="none" stroke="#c0c0c0" stroke-width="1.600"/></svg>
<div class="abs" style="left:743px;top:198px;width:11px;height:178px;background:rgba(166,166,166,0.28)"></div>
<div class="abs" style="left:86px;top:493px;width:337px;height:11px;background:rgba(166,166,166,0.28)"></div>
<div class="abs" style="left:338px;top:500px;width:66px;height:4px;background:#3c5a94"></div>
</div>
<div id="crumbs">
<div class="t" style="left:86px;top:6px;color:#bbbbbb">Index</div>
<div class="t" style="left:152px;top:6px;color:#bbbbbb">build()</div>
<div class="t" style="left:224px;top:6px;color:#bbbbbb">Flex</div>
<div class="t" style="left:278px;top:6px;color:#bbbbbb">callback for onClick()</div>
<svg style="left:139px;top:12px" width="5" height="9" viewBox="0 0 5 9" ><path d="M0.700 0.700l3.300 3.800-3.300 3.800" fill="none" stroke="#7a7d80" stroke-width="1.200"/></svg>
<svg style="left:211px;top:12px" width="5" height="9" viewBox="0 0 5 9" ><path d="M0.700 0.700l3.300 3.800-3.300 3.800" fill="none" stroke="#7a7d80" stroke-width="1.200"/></svg>
<svg style="left:265px;top:12px" width="5" height="9" viewBox="0 0 5 9" ><path d="M0.700 0.700l3.300 3.800-3.300 3.800" fill="none" stroke="#7a7d80" stroke-width="1.200"/></svg>
</div>
<div id="pv">
<div id="pvhead">
<div class="t" style="left:8px;top:7px;font-size:16.5px">Previewer</div>
<svg style="left:459px;top:9px" width="20" height="17" viewBox="0 0 20 17" ><path d="M0 0h12.500v2.800H7.800V16H4.700V2.800H0z" fill="#b6b8ba"/><path d="M11 5.200h9v2.400h-3.200V16h-2.600V7.600H11z" fill="#b6b8ba"/></svg>
<svg style="left:494px;top:8px" width="18" height="18" viewBox="0 0 18 18" ><path d="M15.200 6.500A6.600 6.600 0 0 0 3 5.600M2.800 11.500A6.600 6.600 0 0 0 15 12.400" fill="none" stroke="#b6b8ba" stroke-width="2.300"/><path d="M0.800 1.500l0.600 6 5.600-1.700zM17.200 16.500l-0.600-6-5.600 1.700z" fill="#b6b8ba"/></svg>
<svg style="left:527px;top:7px" width="20" height="20" viewBox="0 0 20 20" ><path d="M1 4h16v1.600h-1.600c0 5-2.400 7.400-6.400 7.400S2.600 10.600 2.600 5.600H1z" fill="#6b6e70"/><path d="M5.400 0.600v4M12.600 0.600v4" stroke="#6b6e70" stroke-width="1.600"/><path d="M9 12.500c0 5 1 6.500 3 6.500s1.800-3.500 3.600-3.500h2.400" fill="none" stroke="#6b6e70" stroke-width="1.200"/></svg>
<div class="abs" style="left:558px;top:5px;width:1px;height:23px;background:#55585a"></div>
<svg style="left:572px;top:8px" width="18" height="18" viewBox="0 0 18 18" ><path d="M6.78,3.53L6.81,1.10L11.19,1.10L11.22,3.53L12.63,4.34L14.75,3.15L16.94,6.94L14.85,8.18L14.85,9.82L16.94,11.06L14.75,14.85L12.63,13.66L11.22,14.47L11.19,16.90L6.81,16.90L6.78,14.47L5.37,13.66L3.25,14.85L1.06,11.06L3.15,9.82L3.15,8.18L1.06,6.94L3.25,3.15L5.37,4.34ZM11.87,9A2.87,2.87 0 1 0 6.13,9A2.87,2.87 0 1 0 11.87,9Z" fill="#b9bbbd" fill-rule="evenodd"/><path d="M14.90,9A5.90,5.90 0 1 1 3.10,9A5.90,5.90 0 1 1 14.90,9ZM11.87,9A2.87,2.87 0 1 0 6.13,9A2.87,2.87 0 1 0 11.87,9Z" fill="#b9bbbd" fill-rule="evenodd"/></svg>
<div class="abs" style="left:607px;top:15.700px;width:15.600px;height:2.500px;background:#bcbec0"></div>
</div>
<div id="pvbar">
<div class="t" style="left:16px;top:6px;font-size:14.56px;color:#ffffff">entry : pages/index</div>
<div class="abs" style="left:370px;top:5px;width:50px;height:22px;border:1px solid #2a2d34;border-radius:4px;background:#3c4048;overflow:hidden"><div class="abs" style="left:0;top:0;width:24px;height:20px;background:#2f333c;border-right:1px solid #343841"></div></div>
<svg style="left:377px;top:10px" width="12" height="12" viewBox="0 0 12 12" ><g fill="none" stroke="#2f84da" stroke-width="1.300"><path d="M0.650 3.200V0.650h2.600M8.800 0.650h2.600v2.600M11.350 8.800v2.600H8.800M3.200 11.350H0.650V8.800"/><path d="M1.600 6c1.500-2 2.900-2.800 4.400-2.800S8.900 4 10.400 6C8.900 8 7.500 8.800 6 8.800S3.100 8 1.600 6z"/></g><circle cx="6" cy="6" r="1.500" fill="#2f84da"/></svg>
<svg style="left:400px;top:9px" width="14" height="14" viewBox="0 0 14 14" ><g fill="#979a9d"><path d="M7 0l7 3.600-7 3.600-7-3.600z"/><path d="M1.400 6.300L0 7l7 3.600L14 7l-1.400-0.700L7 9.200z"/><path d="M1.400 9.700L0 10.400 7 14l7-3.600-1.400-0.700L7 12.600z"/></g></svg>
<div class="abs" style="left:438px;top:5px;width:50px;height:22px;border:1px solid #2a2d34;border-radius:4px;background:#3c4048"></div>
<svg style="left:445px;top:10px" width="12" height="12" viewBox="0 0 12 12" ><g fill="#afb1b3"><rect x="0" y="0" width="4.800" height="4.800"/><rect x="0" y="7" width="4.800" height="4.800"/><rect x="7" y="7" width="4.800" height="4.800"/><path d="M9.400-0.400l2.900 2.900-2.900 2.900-2.900-2.900z"/></g></svg>
<svg style="left:470px;top:14px" width="10" height="6" viewBox="0 0 10 6"><path d="M0 0h10l-5.0 6z" fill="#afb1b3"/></svg>
<svg style="left:504px;top:10.5px" width="12" height="12" viewBox="0 0 12 12" ><rect x="1.500" y="1.500" width="9" height="9" fill="none" stroke="#a4a6a9" stroke-width="1.300"/><g fill="#a4a6a9"><rect x="0" y="0" width="2.800" height="2.800"/><rect x="9.200" y="0" width="2.800" height="2.800"/><rect x="0" y="9.200" width="2.800" height="2.800"/><rect x="9.200" y="9.200" width="2.800" height="2.800"/></g></svg>
<svg style="left:537px;top:10px" width="14" height="15" viewBox="0 0 14 15" ><circle cx="6" cy="6" r="5.300" fill="none" stroke="#8e9194" stroke-width="1.200"/><path d="M3.600 6h4.800" stroke="#a4a6a9" stroke-width="1"/><path d="M9.800 9.800l3.400 4" stroke="#8e9194" stroke-width="1.200"/></svg>
<svg style="left:567px;top:10px" width="14" height="15" viewBox="0 0 14 15" ><circle cx="6" cy="6" r="5.300" fill="none" stroke="#8e9194" stroke-width="1.200"/><path d="M3.600 6h4.800M6 3.600v4.800" stroke="#a4a6a9" stroke-width="1"/><path d="M9.800 9.800l3.400 4" stroke="#8e9194" stroke-width="1.200"/></svg>
<svg style="left:603px;top:9.7px" width="13" height="13" viewBox="0 0 13 13" ><rect x="0.600" y="0.600" width="11.800" height="11.800" rx="1" fill="none" stroke="#8e9194" stroke-width="1.200"/><path d="M3.200 5.800V3.200h2.600M9.800 7.200v2.600H7.200" fill="none" stroke="#a4a6a9" stroke-width="1"/></svg>
</div>
<div class="t" style="left:270px;top:97px;font-size:13px;letter-spacing:0.450px;font-weight:bold;color:#ececec">P40 (medium)</div>
<div class="abs" style="left:255px;top:126px;width:122px;height:32px;background:#3c404a;box-shadow:0 0 8px rgba(20,22,28,0.400)"></div>
<div class="abs" style="left:295px;top:126px;width:1px;height:32px;background:#4d515a"></div>
<div class="abs" style="left:336px;top:126px;width:1px;height:32px;background:#4d515a"></div>
<svg style="left:266px;top:133px" width="18" height="19" viewBox="0 0 18 19" ><path d="M15.300 1.200v16.600L1.300 9.500z" fill="none" stroke="#7c7f86" stroke-width="1.300" stroke-linejoin="round"/></svg>
<svg style="left:306px;top:133px" width="21" height="19" viewBox="0 0 21 19" ><rect x="0.700" y="0.700" width="8.600" height="16.600" rx="1.800" fill="none" stroke="#7c7f86" stroke-width="1.400"/><path d="M4 14.600h2" stroke="#7c7f86" stroke-width="1.200"/><path d="M11.400 8.700h6.200a1.600 1.600 0 0 1 1.600 1.600v5.400a1.600 1.600 0 0 1-1.600 1.600h-6.200" fill="none" stroke="#7c7f86" stroke-width="1.400"/></svg>
<svg style="left:346px;top:140px" width="21" height="5" viewBox="0 0 21 5" ><g fill="#8a8d94"><circle cx="2.500" cy="2.500" r="2"/><circle cx="10" cy="2.500" r="2"/><circle cx="17.300" cy="2.500" r="2"/></g></svg>
<div class="abs" style="left:430px;top:282px;width:5px;height:63px;background:#1b1b1b;border-radius:0 3px 3px 0"></div>
<div class="abs" style="left:430px;top:356px;width:5px;height:32px;background:#1b1b1b;border-radius:0 3px 3px 0"></div>
<div class="abs" style="left:202px;top:187px;width:228px;height:400px;background:#1b1b1b;border-radius:9px 9px 0 0;overflow:hidden"><div class="abs" style="left:0;top:0;width:228px;height:110px;background:linear-gradient(to right,rgba(118,122,126,0.95),rgba(70,72,75,0.6) 14px,rgba(27,27,27,0) 46px) 0 0/100% 9px no-repeat,linear-gradient(to bottom,rgba(118,122,126,0.95),rgba(70,72,75,0.55) 30px,rgba(27,27,27,0) 100px) 0 0/9px 100% no-repeat"></div></div>
<div class="abs" style="left:210px;top:195px;width:213px;height:400px;background:#ffffff;border-radius:6px 6px 0 0"></div>
<div class="abs" style="left:210px;top:408px;width:213px;height:36px;line-height:36px;text-align:center;font-size:29px;font-weight:bold;color:#0c0c0c;transform:scaleX(0.82);white-space:pre">Matrix</div>
<div class="abs" style="left:626px;top:67px;width:6px;height:380px;background:#676a70;border-radius:3px"></div>
</div>
<div id="bp"><div id="bphead">
<div class="t" style="left:7px;top:7px;font-size:16.5px">PreviewerLog</div>
<svg style="left:1807px;top:8px" width="18" height="18" viewBox="0 0 18 18" ><path d="M6.78,3.53L6.81,1.10L11.19,1.10L11.22,3.53L12.63,4.34L14.75,3.15L16.94,6.94L14.85,8.18L14.85,9.82L16.94,11.06L14.75,14.85L12.63,13.66L11.22,14.47L11.19,16.90L6.81,16.90L6.78,14.47L5.37,13.66L3.25,14.85L1.06,11.06L3.15,9.82L3.15,8.18L1.06,6.94L3.25,3.15L5.37,4.34ZM11.87,9A2.87,2.87 0 1 0 6.13,9A2.87,2.87 0 1 0 11.87,9Z" fill="#b9bbbd" fill-rule="evenodd"/><path d="M14.90,9A5.90,5.90 0 1 1 3.10,9A5.90,5.90 0 1 1 14.90,9ZM11.87,9A2.87,2.87 0 1 0 6.13,9A2.87,2.87 0 1 0 11.87,9Z" fill="#b9bbbd" fill-rule="evenodd"/></svg>
<div class="abs" style="left:1842px;top:15.700px;width:15.600px;height:2.500px;background:#bcbec0"></div>
</div>
<div class="combo" style="left:30px;top:40px;width:213px;height:30px;border-color:#646669"></div>
<div class="t" style="left:38px;top:45.5px;font-size:17px">&lt;select device type&gt;</div>
<svg style="left:222px;top:53px" width="11" height="6" viewBox="0 0 11 6"><path d="M0 0h11l-5.5 6z" fill="#9da0a2"/></svg>
<div class="combo" style="left:267px;top:40px;width:190px;height:30px;border-color:#646669"></div>
<div class="t" style="left:275px;top:45.5px;font-size:17px">&lt;select log level&gt;</div>
<svg style="left:437px;top:53px" width="11" height="6" viewBox="0 0 11 6"><path d="M0 0h11l-5.5 6z" fill="#9da0a2"/></svg>
<div class="combo" style="left:481px;top:40px;width:493px;height:30px;border-color:#646669;background:#45494a"></div>
<svg style="left:489px;top:47px" width="21" height="17" viewBox="0 0 21 17" ><circle cx="6.400" cy="6.400" r="5.400" fill="none" stroke="#8e9194" stroke-width="1.400"/><path d="M10.400 10.400l4.200 4.400" stroke="#8e9194" stroke-width="1.600"/><path d="M14.800 6h5.200l-2.600 3z" fill="#8e9194"/></svg>
<div class="abs" style="left:994px;top:47px;width:17px;height:17px;border:1px solid #6b6e70;border-radius:3px;background:#43484a"></div>
<div class="t" style="left:1019px;top:45.5px;font-size:17px">Regex</div>
<div id="bpline"></div><div id="console"></div>
<div class="abs" style="left:4px;top:188px;width:28px;height:28px;border-radius:4px;background:#5a5d5f"></div>
<div class="abs" style="left:4px;top:222px;width:28px;height:28px;border-radius:4px;background:#5a5d5f"></div>
<svg style="left:12.5px;top:93px" width="11" height="15" viewBox="0 0 11 15" ><path d="M5.500 14.500V1.500M0.800 6l4.700-4.700L10.200 6" fill="none" stroke="#606365" stroke-width="1.800"/></svg>
<svg style="left:12.5px;top:126.5px" width="11" height="15" viewBox="0 0 11 15" ><path d="M5.500 0.500v13M0.800 9l4.700 4.700L10.200 9" fill="none" stroke="#606365" stroke-width="1.800"/></svg>
<svg style="left:10px;top:159px" width="17" height="17" viewBox="0 0 17 17" ><path d="M3 1.500H1.200v13H8M11 1.500h1.800V7" fill="none" stroke="#afb1b3" stroke-width="1.400"/><path d="M4 0h1.400v3H4zM8.600 0H10v3H8.600z" fill="#afb1b3"/><path d="M3.600 5.600h6.800M3.600 8.400h4.400M3.600 11.200h3" stroke="#afb1b3" stroke-width="1.300"/><path d="M8.800 9.400h7.400l-3.700 5z" fill="#afb1b3"/></svg>
<svg style="left:9px;top:194px" width="18" height="17" viewBox="0 0 18 17" ><path d="M0 2h16M0 8h12.500a3 3 0 0 1 0 6.500H9" fill="none" stroke="#b8babc" stroke-width="1.800"/><path d="M0 14.200h4" stroke="#b8babc" stroke-width="1.800"/><path d="M10 10.400v7.600l-4.600-3.800z" fill="#b8babc"/></svg>
<svg style="left:9px;top:227px" width="18" height="18" viewBox="0 0 18 18" ><path d="M0 3.500h6M0 9h6M0 16h18" stroke="#b8babc" stroke-width="1.800"/><path d="M12.500 0v11" stroke="#b8babc" stroke-width="1.800"/><path d="M8 7.500l4.500 4.600L17 7.500" fill="none" stroke="#b8babc" stroke-width="1.800"/></svg>
<svg style="left:11px;top:261px" width="14" height="17" viewBox="0 0 14 17" ><path d="M0 2.200h14v2H0zM4.600 0h4.800v2.400H4.600zM1.400 5.200h11.200V15.400a1.600 1.600 0 0 1-1.600 1.600H3a1.600 1.600 0 0 1-1.600-1.600z" fill="#afb1b3"/></svg>
</div>
<div id="status">
<div class="abs" style="left:526px;top:0;width:129px;height:28px;background:#2b2d2e"></div>
<div class="abs" style="left:0;top:28px;width:1909px;height:2px;background:#414446"></div>
<svg style="left:38px;top:9px" width="13" height="14" viewBox="0 0 13 14" ><path d="M0.500 0.500v11l9-5.500z" fill="#afb1b3"/><circle cx="10" cy="11.400" r="2.200" fill="#101010"/></svg>
<div class="sb" style="left:56px;color:#bbbbbb">Run</div>
<svg style="left:105px;top:9px" width="14" height="12" viewBox="0 0 14 12" ><g fill="#afb1b3"><rect x="0" y="0.500" width="2.600" height="2.400"/><rect x="0" y="4.700" width="2.600" height="2.400"/><rect x="0" y="8.900" width="2.600" height="2.400"/><rect x="4" y="0.500" width="9.600" height="2.400"/><rect x="4" y="4.700" width="9.600" height="2.400"/><rect x="4" y="8.900" width="9.600" height="2.400"/></g></svg>
<div class="sb" style="left:123px;color:#bbbbbb">TODO</div>
<svg style="left:189px;top:8px" width="14" height="14" viewBox="0 0 14 14" ><circle cx="6.800" cy="6.800" r="6.600" fill="#afb1b3"/><path d="M6.800 2.800v5" stroke="#3c3f41" stroke-width="2"/><circle cx="6.800" cy="10.300" r="1.200" fill="#3c3f41"/></svg>
<div class="sb" style="left:207px;color:#bbbbbb">Problems</div>
<svg style="left:289px;top:8px" width="15" height="14" viewBox="0 0 15 14" ><rect x="0" y="0" width="14.500" height="13" rx="1" fill="#afb1b3"/><path d="M2.600 3.400l3.400 3-3.400 3" fill="none" stroke="#3c3f41" stroke-width="1.500"/><path d="M7.400 10h4.600" stroke="#3c3f41" stroke-width="1.500"/></svg>
<div class="sb" style="left:308px;color:#bbbbbb">Terminal</div>
<svg style="left:385px;top:9px" width="15" height="13" viewBox="0 0 15 13" ><path d="M0 0h3.200l4 4.800 2.800-3.600C11 0 12 0 14.600 0v2.200c-1.600 0-2 .2-2.800 1.200L9 6.600l4.200 5.600h-3.400L7.200 8.800 4.600 12C3.600 13 2.800 13 0 13v-2.200c1.800 0 2.200-.2 3-1.200l2.400-3z" fill="#afb1b3"/></svg>
<div class="sb" style="left:405px;color:#bbbbbb">Profiler</div>
<svg style="left:472px;top:8px" width="17" height="15" viewBox="0 0 17 15" ><path d="M0 1.600h16.500V14.500H0z" fill="#afb1b3"/><path d="M3.400 0h2.200v3H3.400zM11 0h2.200v3H11z" fill="#afb1b3"/><path d="M2.400 5.600h11.800M2.400 8.400h11.800M2.400 11.200h7" stroke="#3c3f41" stroke-width="1.400"/></svg>
<div class="sb" style="left:492px;color:#bbbbbb">Log</div>
<svg style="left:541px;top:7px" width="15" height="16" viewBox="0 0 15 16" ><path d="M3.200 2.200H0.700V15.300h13V2.200h-2.500" fill="none" stroke="#afb1b3" stroke-width="1.300"/><path d="M4.600 0.500v3M7.200 0.500v3M9.800 0.500v3" stroke="#afb1b3" stroke-width="1.300"/><path d="M3.200 6.600h8M3.200 9.400h8M3.200 12.200h5" stroke="#afb1b3" stroke-width="1.300"/></svg>
<div class="sb" style="left:560px;color:#f0f0f0">PreviewerLog</div>
<svg style="left:670px;top:6px" width="21" height="20" viewBox="0 0 21 20" ><circle cx="9" cy="9" r="8" fill="#515456"/><path d="M14.600 14.600l5 5" stroke="#515456" stroke-width="2.600"/><path d="M6.400 6l-3 3 3 3M11.600 6l3 3-3 3M10 5l-2 8" fill="none" stroke="#3c3f41" stroke-width="1.300"/></svg>
<div class="sb" style="left:694px;color:#bbbbbb">Code Linter</div>
<svg style="left:1795px;top:7px" width="17" height="17" viewBox="0 0 17 17" ><path d="M8.500 0.800a7.600 7.600 0 0 1 7.600 7.600v7.600H8.500a7.600 7.600 0 0 1 0-15.200z" fill="none" stroke="#afb1b3" stroke-width="1.600"/></svg>
<div class="sb" style="left:1815px;color:#bbbbbb">Event Log</div>
</div>
</body>
</html>
